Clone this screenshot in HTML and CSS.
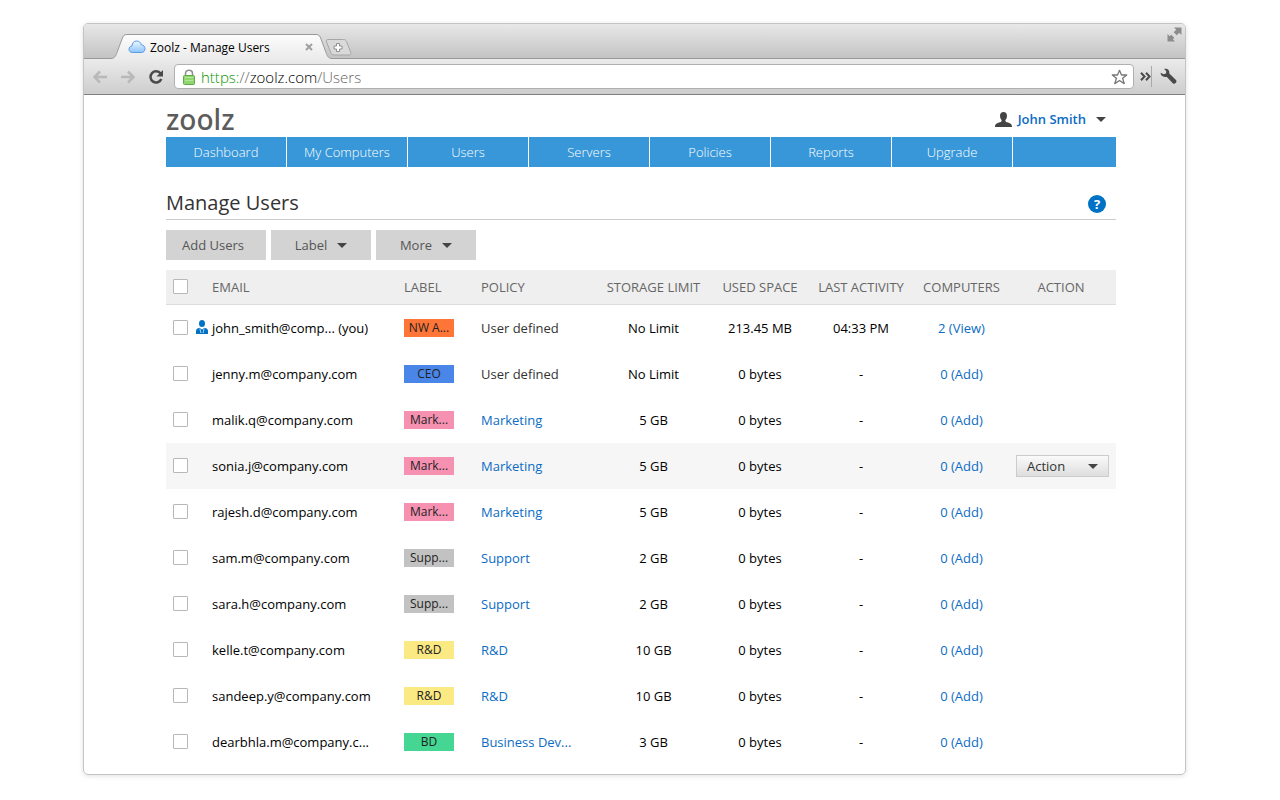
FILE: index.html
```html
<!DOCTYPE html>
<html lang="en">
<head>
    <meta charset="UTF-8">
    <meta name="viewport" content="width=device-width, initial-scale=1.0">
    <title>Zoolz - Manage Users</title>
    <link rel="stylesheet" href="styles.css">
</head>
<body>

    <div class="window">

        <!-- Tab strip -->
        <div class="tab-strip">
            <div class="tab">
                <svg class="tab-edge" width="16" height="25" viewBox="0 0 16 25">
                    <defs>
                        <linearGradient id="tabFill" x1="0" y1="0" x2="0" y2="1">
                            <stop offset="0" stop-color="#fcfcfc"/>
                            <stop offset="1" stop-color="#ebebeb"/>
                        </linearGradient>
                    </defs>
                    <path d="M0 25V24.500C4 24.500 5 21 6 18.500L11 5C12 2 13 .5 16 .5V25Z" fill="url(#tabFill)"/>
                    <path d="M0 24.500C4 24.500 5 21 6 18.500L11 5C12 2 13 .5 16 .5" fill="none" stroke="#999"/>
                </svg>
                <div class="tab-body">
                    <svg width="18" height="14" viewBox="0 0 18 14">
                        <defs>
                            <linearGradient id="cloudFill" x1="0" y1="0" x2="0" y2="1">
                                <stop offset="0" stop-color="#eef7ff"/>
                                <stop offset="1" stop-color="#8cc4fb"/>
                            </linearGradient>
                        </defs>
                        <path d="M4.500 12.500C2.200 12.500 1 11 1 9.200C1 7.400 2.300 6.200 4 6C4 3 6 1 8.700 1C11.200 1 12.900 2.700 13.300 4.900C15.500 5 17 6.600 17 8.700C17 10.900 15.500 12.500 13.400 12.500Z" fill="url(#cloudFill)" stroke="#5b9be0"/>
                    </svg>
                    <span class="tab-title">Zoolz - Manage Users</span>
                    <button class="icon-button" aria-label="Close tab">
                        <svg width="8" height="8" viewBox="0 0 8 8"><path d="M1 1L7 7M7 1L1 7" stroke="#a0a0a0" stroke-width="2"/></svg>
                    </button>
                </div>
                <svg class="tab-edge" width="16" height="25" viewBox="0 0 16 25">
                    <path d="M16 25V24.500C12 24.500 11 21 10 18.500L5 5C4 2 3 .5 0 .5V25Z" fill="url(#tabFill)"/>
                    <path d="M16 24.500C12 24.500 11 21 10 18.500L5 5C4 2 3 .5 0 .5" fill="none" stroke="#999"/>
                </svg>
            </div>
            <button class="icon-button new-tab" aria-label="New tab">
                <svg width="27" height="17" viewBox="0 0 27 17">
                    <path d="M3 .5H18.500C20 .5 21 1.200 21.600 2.500L25.800 13.500C26.400 15 25.500 16 24 16H9C7.500 16 6.500 15.200 6 14L1.500 3C1 1.500 1.500 .5 3 .5Z" fill="#d9d9d9" stroke="#a6a6a6"/>
                    <path d="M11.500 4.500H14.500V7H17V10H14.500V12.500H11.500V10H9V7H11.500Z" fill="#fff" stroke="#8e8e8e"/>
                </svg>
            </button>
            <button class="icon-button full-screen" aria-label="Full screen">
                <svg width="15" height="15" viewBox="0 0 15 15">
                    <path d="M7 .5H14.500V8L12.300 5.800L9.800 8.300L6.700 5.200L9.200 2.700Z" fill="#8c8c8c"/>
                    <path d="M8 14.500H.5V7L2.700 9.200L4.200 7.700L7.300 10.800L5.800 12.300Z" fill="#8c8c8c"/>
                </svg>
            </button>
        </div>

        <!-- Toolbar -->
        <div class="toolbar">
            <button class="icon-button" aria-label="Back">
                <svg width="16" height="14" viewBox="0 0 16 14"><path d="M8 1.500L2.500 7L8 12.500M3 7H15" fill="none" stroke="#b9b9b9" stroke-width="2.500"/></svg>
            </button>
            <button class="icon-button" aria-label="Forward">
                <svg width="16" height="14" viewBox="0 0 16 14"><path d="M8 1.500L13.500 7L8 12.500M13 7H1" fill="none" stroke="#b9b9b9" stroke-width="2.500"/></svg>
            </button>
            <button class="icon-button" aria-label="Reload">
                <svg width="16" height="16" viewBox="0 0 16 16">
                    <path d="M12.600 4.600A5.600 5.600 0 1 0 13.300 10" fill="none" stroke="#4a4a4a" stroke-width="2.500"/>
                    <path d="M15 1V7.500H8.500Z" fill="#4a4a4a"/>
                </svg>
            </button>
            <div class="address-bar">
                <svg width="12" height="16" viewBox="0 0 12 16">
                    <path d="M2.500 8V4.500C2.500 2.500 4 1.200 6 1.200S9.500 2.500 9.500 4.500V8" fill="none" stroke="#8e8e8e" stroke-width="1.500"/>
                    <rect x=".5" y="6.500" width="11" height="9" rx="1" fill="#90d66f" stroke="#62a848"/>
                    <path d="M2 8.500H10M2 11.500H10" stroke="#b4e69c"/>
                </svg>
                <span class="url"><span class="scheme">https:</span>//<span class="host">zoolz.com</span>/Users</span>
                <button class="icon-button" aria-label="Bookmark">
                    <svg width="17" height="16" viewBox="0 0 17 16"><path d="M8.500 1.300L10.500 6H15.700L11.600 9.200L13.200 14.600L8.500 11.500L3.800 14.600L5.400 9.200L1.300 6H6.500Z" fill="#fff" stroke="#777" stroke-width="1.300" stroke-linejoin="round"/></svg>
                </button>
            </div>
            <button class="icon-button more-tools" aria-label="More tools">
                <svg width="11" height="9" viewBox="0 0 11 9"><path d="M1 .8L4.500 4.500L1 8.200M6 .8L9.500 4.500L6 8.200" fill="none" stroke="#4a4a4a" stroke-width="2"/></svg>
            </button>
            <button class="icon-button" aria-label="Settings">
                <svg width="17" height="17" viewBox="0 0 17 17"><path d="M4.200 1C7.500 .3 9.800 2.500 9.300 5.600L16 12C16.800 13 16.500 14.200 15.700 15C14.800 15.900 13.700 16 12.800 15.200L6.600 8.700C3.500 9.700 .6 7.800 .6 4.800L3.600 6.300L6 5.600L6.300 3.200Z" fill="#4a4a4a"/></svg>
            </button>
        </div>

        <!-- Page -->
        <div class="page">
            <header class="header">
                <div class="logo">zoolz</div>
                <a href="#" class="account">
                    <svg width="17" height="15" viewBox="0 0 17 15"><path d="M8.500 0C10.700 0 12 1.500 12 3.800C12 5.600 11.300 7 10.400 8C10.300 9.300 10.700 9.800 12 10.300C15 11.400 17 11.500 17 15H0C0 11.500 2 11.400 5 10.300C6.300 9.800 6.700 9.300 6.600 8C5.700 7 5 5.600 5 3.800C5 1.500 6.300 0 8.500 0Z" fill="#444"/></svg>
                    <span>John Smith</span>
                    <span class="caret"></span>
                </a>
            </header>

            <nav class="nav">
                <a href="#">Dashboard</a>
                <a href="#">My Computers</a>
                <a href="#">Users</a>
                <a href="#">Servers</a>
                <a href="#">Policies</a>
                <a href="#">Reports</a>
                <a href="#">Upgrade</a>
            </nav>

            <div class="title-row">
                <h1>Manage Users</h1>
                <a href="#" class="help" aria-label="Help">?</a>
            </div>

            <div class="actions">
                <button class="add">Add Users</button>
                <button>Label<span class="caret"></span></button>
                <button>More<span class="caret"></span></button>
            </div>

            <table class="users">
                <colgroup>
                    <col class="col-check">
                    <col>
                    <col class="col-label">
                    <col class="col-policy">
                    <col class="col-storage">
                    <col class="col-used">
                    <col class="col-activity">
                    <col class="col-computers">
                    <col class="col-action">
                </colgroup>
                <thead>
                    <tr>
                        <th><input type="checkbox" aria-label="Select all"></th>
                        <th>EMAIL</th>
                        <th>LABEL</th>
                        <th>POLICY</th>
                        <th class="center">STORAGE LIMIT</th>
                        <th class="center">USED SPACE</th>
                        <th class="center">LAST ACTIVITY</th>
                        <th class="center">COMPUTERS</th>
                        <th class="center">ACTION</th>
                    </tr>
                </thead>
                <tbody>
                    <tr>
                        <td>
                            <div class="select">
                                <input type="checkbox" aria-label="Select john_smith">
                                <svg width="12" height="14" viewBox="0 0 12 14">
                                    <ellipse cx="6" cy="3.500" rx="3" ry="3.500" fill="#0072c6"/>
                                    <path d="M0 14V11C0 9 1.500 8.300 3.500 7.700L6 9.500L8.500 7.700C10.500 8.300 12 9 12 11V14Z" fill="#0072c6"/>
                                    <path d="M3.800 8.500L5 13M8.200 8.500L7 13" stroke="#fff" stroke-width=".7"/>
                                </svg>
                            </div>
                        </td>
                        <td>john_smith@comp... (you)</td>
                        <td><span class="tag orange">NW A...</span></td>
                        <td class="plain">User defined</td>
                        <td class="center">No Limit</td>
                        <td class="center">213.45 MB</td>
                        <td class="center">04:33 PM</td>
                        <td class="center"><a href="#">2 (View)</a></td>
                        <td></td>
                    </tr>
                    <tr>
                        <td><input type="checkbox" aria-label="Select jenny.m"></td>
                        <td>jenny.m@company.com</td>
                        <td><span class="tag blue">CEO</span></td>
                        <td class="plain">User defined</td>
                        <td class="center">No Limit</td>
                        <td class="center">0 bytes</td>
                        <td class="center">-</td>
                        <td class="center"><a href="#">0 (Add)</a></td>
                        <td></td>
                    </tr>
                    <tr>
                        <td><input type="checkbox" aria-label="Select malik.q"></td>
                        <td>malik.q@company.com</td>
                        <td><span class="tag pink">Mark...</span></td>
                        <td><a href="#">Marketing</a></td>
                        <td class="center">5 GB</td>
                        <td class="center">0 bytes</td>
                        <td class="center">-</td>
                        <td class="center"><a href="#">0 (Add)</a></td>
                        <td></td>
                    </tr>
                    <tr class="active">
                        <td><input type="checkbox" aria-label="Select sonia.j"></td>
                        <td>sonia.j@company.com</td>
                        <td><span class="tag pink">Mark...</span></td>
                        <td><a href="#">Marketing</a></td>
                        <td class="center">5 GB</td>
                        <td class="center">0 bytes</td>
                        <td class="center">-</td>
                        <td class="center"><a href="#">0 (Add)</a></td>
                        <td><button class="row-action">Action <span class="caret"></span></button></td>
                    </tr>
                    <tr>
                        <td><input type="checkbox" aria-label="Select rajesh.d"></td>
                        <td>rajesh.d@company.com</td>
                        <td><span class="tag pink">Mark...</span></td>
                        <td><a href="#">Marketing</a></td>
                        <td class="center">5 GB</td>
                        <td class="center">0 bytes</td>
                        <td class="center">-</td>
                        <td class="center"><a href="#">0 (Add)</a></td>
                        <td></td>
                    </tr>
                    <tr>
                        <td><input type="checkbox" aria-label="Select sam.m"></td>
                        <td>sam.m@company.com</td>
                        <td><span class="tag gray">Supp...</span></td>
                        <td><a href="#">Support</a></td>
                        <td class="center">2 GB</td>
                        <td class="center">0 bytes</td>
                        <td class="center">-</td>
                        <td class="center"><a href="#">0 (Add)</a></td>
                        <td></td>
                    </tr>
                    <tr>
                        <td><input type="checkbox" aria-label="Select sara.h"></td>
                        <td>sara.h@company.com</td>
                        <td><span class="tag gray">Supp...</span></td>
                        <td><a href="#">Support</a></td>
                        <td class="center">2 GB</td>
                        <td class="center">0 bytes</td>
                        <td class="center">-</td>
                        <td class="center"><a href="#">0 (Add)</a></td>
                        <td></td>
                    </tr>
                    <tr>
                        <td><input type="checkbox" aria-label="Select kelle.t"></td>
                        <td>kelle.t@company.com</td>
                        <td><span class="tag yellow">R&amp;D</span></td>
                        <td><a href="#">R&amp;D</a></td>
                        <td class="center">10 GB</td>
                        <td class="center">0 bytes</td>
                        <td class="center">-</td>
                        <td class="center"><a href="#">0 (Add)</a></td>
                        <td></td>
                    </tr>
                    <tr>
                        <td><input type="checkbox" aria-label="Select sandeep.y"></td>
                        <td>sandeep.y@company.com</td>
                        <td><span class="tag yellow">R&amp;D</span></td>
                        <td><a href="#">R&amp;D</a></td>
                        <td class="center">10 GB</td>
                        <td class="center">0 bytes</td>
                        <td class="center">-</td>
                        <td class="center"><a href="#">0 (Add)</a></td>
                        <td></td>
                    </tr>
                    <tr>
                        <td><input type="checkbox" aria-label="Select dearbhla.m"></td>
                        <td>dearbhla.m@company.c...</td>
                        <td><span class="tag green">BD</span></td>
                        <td><a href="#">Business Dev...</a></td>
                        <td class="center">3 GB</td>
                        <td class="center">0 bytes</td>
                        <td class="center">-</td>
                        <td class="center"><a href="#">0 (Add)</a></td>
                        <td></td>
                    </tr>
                </tbody>
            </table>
        </div>
    </div>

</body>
</html>
```
FILE: styles.css
```css
/* Basic reset */
* {
    margin: 0;
    padding: 0;
    box-sizing: border-box;
}

body {
    font-family: "Open Sans", "Noto Sans", sans-serif;
    font-size: 13px;
    color: #000;
    background: #fff;
    padding: 23px 94px 24px 83px;
}

svg {
    display: block;
    flex: none;
}

a {
    color: #0b6cc4;
    text-decoration: none;
}

button {
    font-family: inherit;
    font-size: 13px;
    cursor: pointer;
}

.icon-button {
    border: none;
    background: none;
    flex: none;
}

/* Browser window */
.window {
    border: 1px solid #c4c4c4;
    border-radius: 5px;
    box-shadow: 0 1px 5px rgba(0, 0, 0, 0.12);
    overflow: hidden;
}

.tab-strip {
    display: flex;
    align-items: flex-end;
    height: 35px;
    padding-left: 27px;
    padding-right: 3px;
    background: linear-gradient(#e8e8e8, #c2c2c2);
    box-shadow: inset 0 -1px #999;
}

.tab {
    display: flex;
    height: 25px;
}

.tab-body {
    display: flex;
    align-items: center;
    width: 189px;
    padding-left: 1px;
    padding-right: 3px;
    border-top: 1px solid #999;
    background: linear-gradient(#fcfcfc, #ebebeb);
}

.tab-title {
    flex: 1;
    padding-left: 4px;
    font-size: 12px;
    white-space: nowrap;
}

.new-tab {
    align-self: flex-end;
    margin-left: -7px;
    margin-bottom: 3px;
}

.full-screen {
    align-self: flex-start;
    margin-left: auto;
    margin-top: 3px;
}

/* Toolbar with the address bar */
.toolbar {
    display: flex;
    align-items: center;
    gap: 12px;
    height: 36px;
    padding: 0 8px;
    background: linear-gradient(#ebebeb, #cdcdcd);
    border-bottom: 1px solid #7f7f7f;
}

.address-bar {
    display: flex;
    align-items: center;
    flex: 1;
    height: 25px;
    margin-left: -2px;
    padding: 0 5px 0 8px;
    background: #fff;
    border: 1px solid #b0b0b0;
    border-radius: 4px;
}

.url {
    flex: 1;
    padding-left: 6px;
    font-size: 15px;
    font-weight: 300;
    color: #666;
}

.scheme {
    color: #0a9400;
}

.host {
    color: #000;
}

.more-tools {
    margin-left: -6px;
    margin-right: -4px;
    padding: 6px 0;
    border-right: 1px solid #aaa;
}

/* Page content */
.page {
    padding: 11px 69px 9px 82px;
}

.header {
    display: flex;
    justify-content: space-between;
    align-items: center;
    height: 26px;
    margin-bottom: 5px;
    padding-right: 10px;
}

.logo {
    font-family: "Noto Sans", sans-serif;
    font-size: 28px;
    font-weight: 500;
    line-height: 26px;
    color: #5c5c5c;
}

.account {
    display: flex;
    align-items: center;
    gap: 6px;
    font-weight: 600;
}

.caret {
    display: inline-block;
    border: 5px solid transparent;
    border-top-color: #444;
    border-bottom: none;
}

.account .caret {
    margin-left: 4px;
}

.nav {
    display: flex;
    height: 30px;
    background: #3897d8;
}

.nav a {
    width: 121px;
    font-weight: 300;
    line-height: 30px;
    text-align: center;
    color: #fff;
    border-right: 1px solid #fff;
}

.title-row {
    display: flex;
    justify-content: space-between;
    align-items: center;
    height: 33px;
    margin-top: 20px;
    padding-right: 10px;
    border-bottom: 1px solid #ccc;
}

h1 {
    font-size: 20px;
    font-weight: 400;
    line-height: 26px;
    color: #333;
}

.help {
    width: 18px;
    height: 18px;
    margin-top: 2px;
    border-radius: 50%;
    background: #0072c6;
    color: #fff;
    font-size: 13px;
    font-weight: 700;
    line-height: 18px;
    text-align: center;
}

.actions {
    display: flex;
    gap: 5px;
    margin: 10px 0;
}

.actions button {
    width: 100px;
    height: 30px;
    border: none;
    background: #d3d3d3;
    color: #555;
}

.actions .add {
    padding-right: 6px;
}

.actions .caret {
    margin-left: 10px;
    vertical-align: 2px;
}

/* Users table */
.users {
    width: 100%;
    table-layout: fixed;
    border-collapse: separate;
    border-spacing: 0;
}

.col-check {
    width: 46px;
}

.col-label {
    width: 77px;
}

.col-policy {
    width: 119px;
}

.col-storage {
    width: 107px;
}

.col-used {
    width: 106px;
}

.col-activity {
    width: 96px;
}

.col-computers {
    width: 105px;
}

.col-action {
    width: 102px;
}

.users th {
    height: 35px;
    font-weight: 400;
    text-align: left;
    color: #666;
    background: #efefef;
    border-bottom: 1px solid #ddd;
}

.users td {
    height: 46px;
    white-space: nowrap;
}

.users th:first-child,
.users td:first-child {
    padding-left: 7px;
    padding-bottom: 2px;
}

.users th:last-child,
.users td:last-child {
    padding-right: 8px;
}

.users td:last-child {
    padding-right: 7px;
}

.users .center {
    text-align: center;
}

.users .plain {
    color: #333;
}

.active td {
    background: #f6f6f6;
}

.users input {
    display: block;
    appearance: none;
    width: 15px;
    height: 15px;
    border: 1px solid #b8b8b8;
    border-radius: 1px;
    background: #fff;
}

.select {
    display: flex;
    align-items: center;
    gap: 8px;
}

.tag {
    display: block;
    width: 50px;
    height: 18px;
    font-size: 12px;
    line-height: 18px;
    text-align: center;
    color: #222;
}

.orange {
    background: #ff7537;
}

.blue {
    background: #4a86e8;
}

.pink {
    background: #f691b2;
}

.gray {
    background: #c2c2c2;
}

.yellow {
    background: #fbe983;
}

.green {
    background: #44d692;
}

.row-action {
    display: flex;
    justify-content: space-between;
    align-items: center;
    width: 93px;
    height: 22px;
    margin-left: auto;
    padding: 0 10px;
    border: 1px solid #ccc;
    background: linear-gradient(#fafafa, #dedede);
    color: #333;
}
```
